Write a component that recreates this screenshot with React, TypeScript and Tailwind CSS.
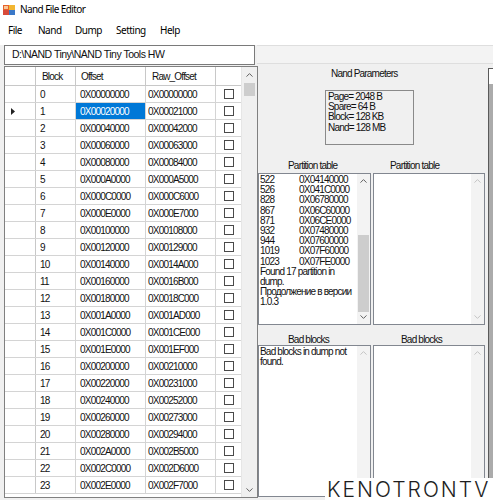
import React from "react";

const hex = (n: number) => "0X" + n.toString(16).toUpperCase().padStart(8, "0");

function Chevron({ up, color }: { up?: boolean; color: string }) {
  return (
    <svg width="7" height="4" viewBox="0 0 7 4">
      <path
        d={up ? "M0.5 3.6 L3.5 0.6 L6.5 3.6" : "M0.5 0.4 L3.5 3.4 L6.5 0.4"}
        stroke={color}
        fill="none"
        strokeWidth="1"
      />
    </svg>
  );
}

function AppIcon() {
  return (
    <svg width="12" height="10" viewBox="0 0 12 10">
      <rect x="0" y="0" width="6" height="5" fill="#e8622a" />
      <rect x="6" y="0" width="6" height="5" fill="#f2b632" />
      <rect x="0" y="5" width="6" height="5" fill="#d84a3a" />
      <rect x="6" y="5" width="6" height="5" fill="#3a78c8" />
      <rect x="1" y="1" width="4" height="3" fill="#f7c79a" />
    </svg>
  );
}

function ListBox({
  lines,
  width,
  active,
}: {
  lines: React.ReactNode[];
  width: string;
  active?: boolean;
}) {
  return (
    <div className={`${width} h-[152px] border border-[#828790] bg-white flex`}>
      <div className="flex-1 pl-[1px] pt-[1px] leading-[10.2px] overflow-hidden">
        {lines.map((l, i) => (
          <div key={i} className="whitespace-nowrap h-[10.2px]">
            {l}
          </div>
        ))}
      </div>
      <div className="w-[13px] bg-[#f3f3f3] flex flex-col">
        <div className="h-[14px] flex items-center justify-center">
          <Chevron up color={active ? "#606060" : "#c4c4c4"} />
        </div>
        <div className="flex-1 relative">
          {active && <div className="absolute left-[1px] right-[1px] top-[47px] h-[77px] bg-[#cdcdcd]" />}
        </div>
        <div className="h-[14px] flex items-center justify-center">
          <Chevron color={active ? "#606060" : "#c4c4c4"} />
        </div>
      </div>
    </div>
  );
}

export default function App() {
  const rows = Array.from({ length: 24 }, (_, i) => i);
  const part: [string, string][] = [
    ["522", "0X04140000"],
    ["526", "0X041C0000"],
    ["828", "0X06780000"],
    ["867", "0X06C60000"],
    ["871", "0X06CE0000"],
    ["932", "0X07480000"],
    ["944", "0X07600000"],
    ["1019", "0X07F60000"],
    ["1023", "0X07FE0000"],
  ];
  const partLines: React.ReactNode[] = [
    ...part.map(([a, b]) => (
      <div className="flex">
        <span className="w-[39px]">{a}</span>
        <span>{b}</span>
      </div>
    )),
    "Found 17 partition in",
    "dump.",
    "Продолжение в версии",
    "1.0.3",
  ];

  return (
    <div className="w-[493px] h-[500px] overflow-hidden bg-[#f0f0f0] relative font-['Liberation_Sans',Arial,sans-serif] text-[10px] tracking-[-0.8px] text-[#111]">
      {/* title + menu */}
      <div className="h-[45px] bg-white">
        <div className="h-[19px] flex items-center pl-[3px] gap-[5px]">
          <AppIcon />
          <span className="font-['Noto_Sans',sans-serif] text-[10px] tracking-[-0.6px] text-black">
            Nand File Editor
          </span>
        </div>
        <div className="h-[22px] flex items-center pl-[8px] font-['Noto_Sans',sans-serif] text-[10px] tracking-[-0.5px] text-black">
          <span className="w-[30px]">File</span>
          <span className="w-[37px]">Nand</span>
          <span className="w-[41px]">Dump</span>
          <span className="w-[44px]">Setting</span>
          <span>Help</span>
        </div>
      </div>

      <div className="flex">
        {/* left column */}
        <div className="w-[257px] pl-[4px] shrink-0">
          <div className="h-[20px] w-[251px] border border-[#7a7a7a] bg-white flex items-center pl-[7px] text-[10.5px] tracking-[-0.5px]">
            {"D:\\NAND Tiny\\NAND Tiny Tools HW"}
          </div>
          <div className="mt-[1px] w-[254px] h-[432px] border border-[#808080] bg-white flex overflow-hidden">
            <div className="w-[236px] shrink-0">
              {/* header */}
              <div className="h-[19px] flex border-b border-[#c8c8c8]">
                <div className="w-[31px] border-r border-[#c8c8c8]" />
                <div className="w-[40px] border-r border-[#c8c8c8] flex items-center pl-[6px]">Block</div>
                <div className="w-[70px] border-r border-[#c8c8c8] flex items-center pl-[5px]">Offset</div>
                <div className="w-[70px] border-r border-[#c8c8c8] flex items-center pl-[6px]">Raw_Offset</div>
                <div className="w-[25px]" />
              </div>
              {rows.map((i) => (
                <div key={i} className="h-[17px] flex border-b border-[#d4d4d4]">
                  <div className="w-[31px] border-r border-[#c8c8c8] flex items-center pl-[6px]">
                    {i === 1 && (
                      <svg width="4" height="7" viewBox="0 0 4 7">
                        <path d="M0 0 L4 3.5 L0 7 Z" fill="#222" />
                      </svg>
                    )}
                  </div>
                  <div className="w-[40px] border-r border-[#d4d4d4] flex items-center pl-[4px]">{i}</div>
                  <div
                    className={`w-[70px] border-r border-[#d4d4d4] flex items-center pl-[4px] ${
                      i === 1 ? "bg-[#0078d7] text-white" : ""
                    }`}
                  >
                    {hex(i * 0x20000)}
                  </div>
                  <div className="w-[70px] border-r border-[#d4d4d4] flex items-center pl-[2px]">
                    {hex(i * 0x21000)}
                  </div>
                  <div className="w-[25px] flex items-center justify-center">
                    <div className="w-[10px] h-[10px] border border-[#4a4a4a] bg-white" />
                  </div>
                </div>
              ))}
            </div>
            <div className="flex-1 bg-[#f0f0f0] border-l border-[#e6e6e6] flex flex-col">
              <div className="h-[15px] flex items-center justify-center">
                <Chevron up color="#606060" />
              </div>
              <div className="flex-1 relative">
                <div className="absolute left-[2px] right-[2px] top-[1px] h-[13px] bg-[#cdcdcd]" />
              </div>
              <div className="h-[15px] flex items-center justify-center">
                <Chevron color="#606060" />
              </div>
            </div>
          </div>
        </div>

        {/* right column */}
        <div className="flex-1 flex flex-col">
          <div className="h-[19px] border-t border-b border-[#dedede] bg-[#f3f3f3]" />
          <div className="flex flex-1">
            <div className="w-[231px] shrink-0">
              <div className="pt-[4px] pl-[74px] leading-[11px] h-[15px]">Nand Parameters</div>
              <div className="mt-[11px] ml-[68px] w-[89px] h-[55px] border border-[#8a8a8a] pl-[2px] pt-[1px] leading-[10.2px]">
                <div>Page= 2048 B</div>
                <div>Spare= 64 B</div>
                <div>Block= 128 KB</div>
                <div>Nand= 128 MB</div>
              </div>
              <div className="mt-[15px] flex leading-[11px] h-[11px]">
                <span className="pl-[31px] w-[133px]">Partition table</span>
                <span>Partition table</span>
              </div>
              <div className="mt-[2px] ml-[1px] flex gap-[2px]">
                <ListBox width="w-[113px]" lines={partLines} active />
                <ListBox width="w-[112px]" lines={[]} />
              </div>
              <div className="mt-[9px] flex leading-[11px] h-[11px]">
                <span className="pl-[31px] w-[144px]">Bad blocks</span>
                <span>Bad blocks</span>
              </div>
              <div className="ml-[1px] flex gap-[2px]">
                <ListBox width="w-[113px]" lines={["Bad blocks in dump not", "found."]} />
                <ListBox width="w-[112px]" lines={[]} />
              </div>
            </div>
            <div className="flex-1 flex flex-col pt-[4px]">
              <div className="flex-1 border-l border-t border-[#5a5a5a] flex flex-col">
                <div className="h-[15px] bg-white" />
                <div className="flex-1 bg-[#ababab]" />
              </div>
            </div>
          </div>
        </div>
      </div>

      {/* watermark */}
      <div className="absolute right-0 bottom-0 w-[168px] h-[22px] bg-white flex items-center pl-[2px] font-['Inter',sans-serif] font-light text-[21px] leading-none tracking-[2px] text-[#1e1e1e] whitespace-nowrap overflow-hidden">
        KENOTRONTV
      </div>
    </div>
  );
}
